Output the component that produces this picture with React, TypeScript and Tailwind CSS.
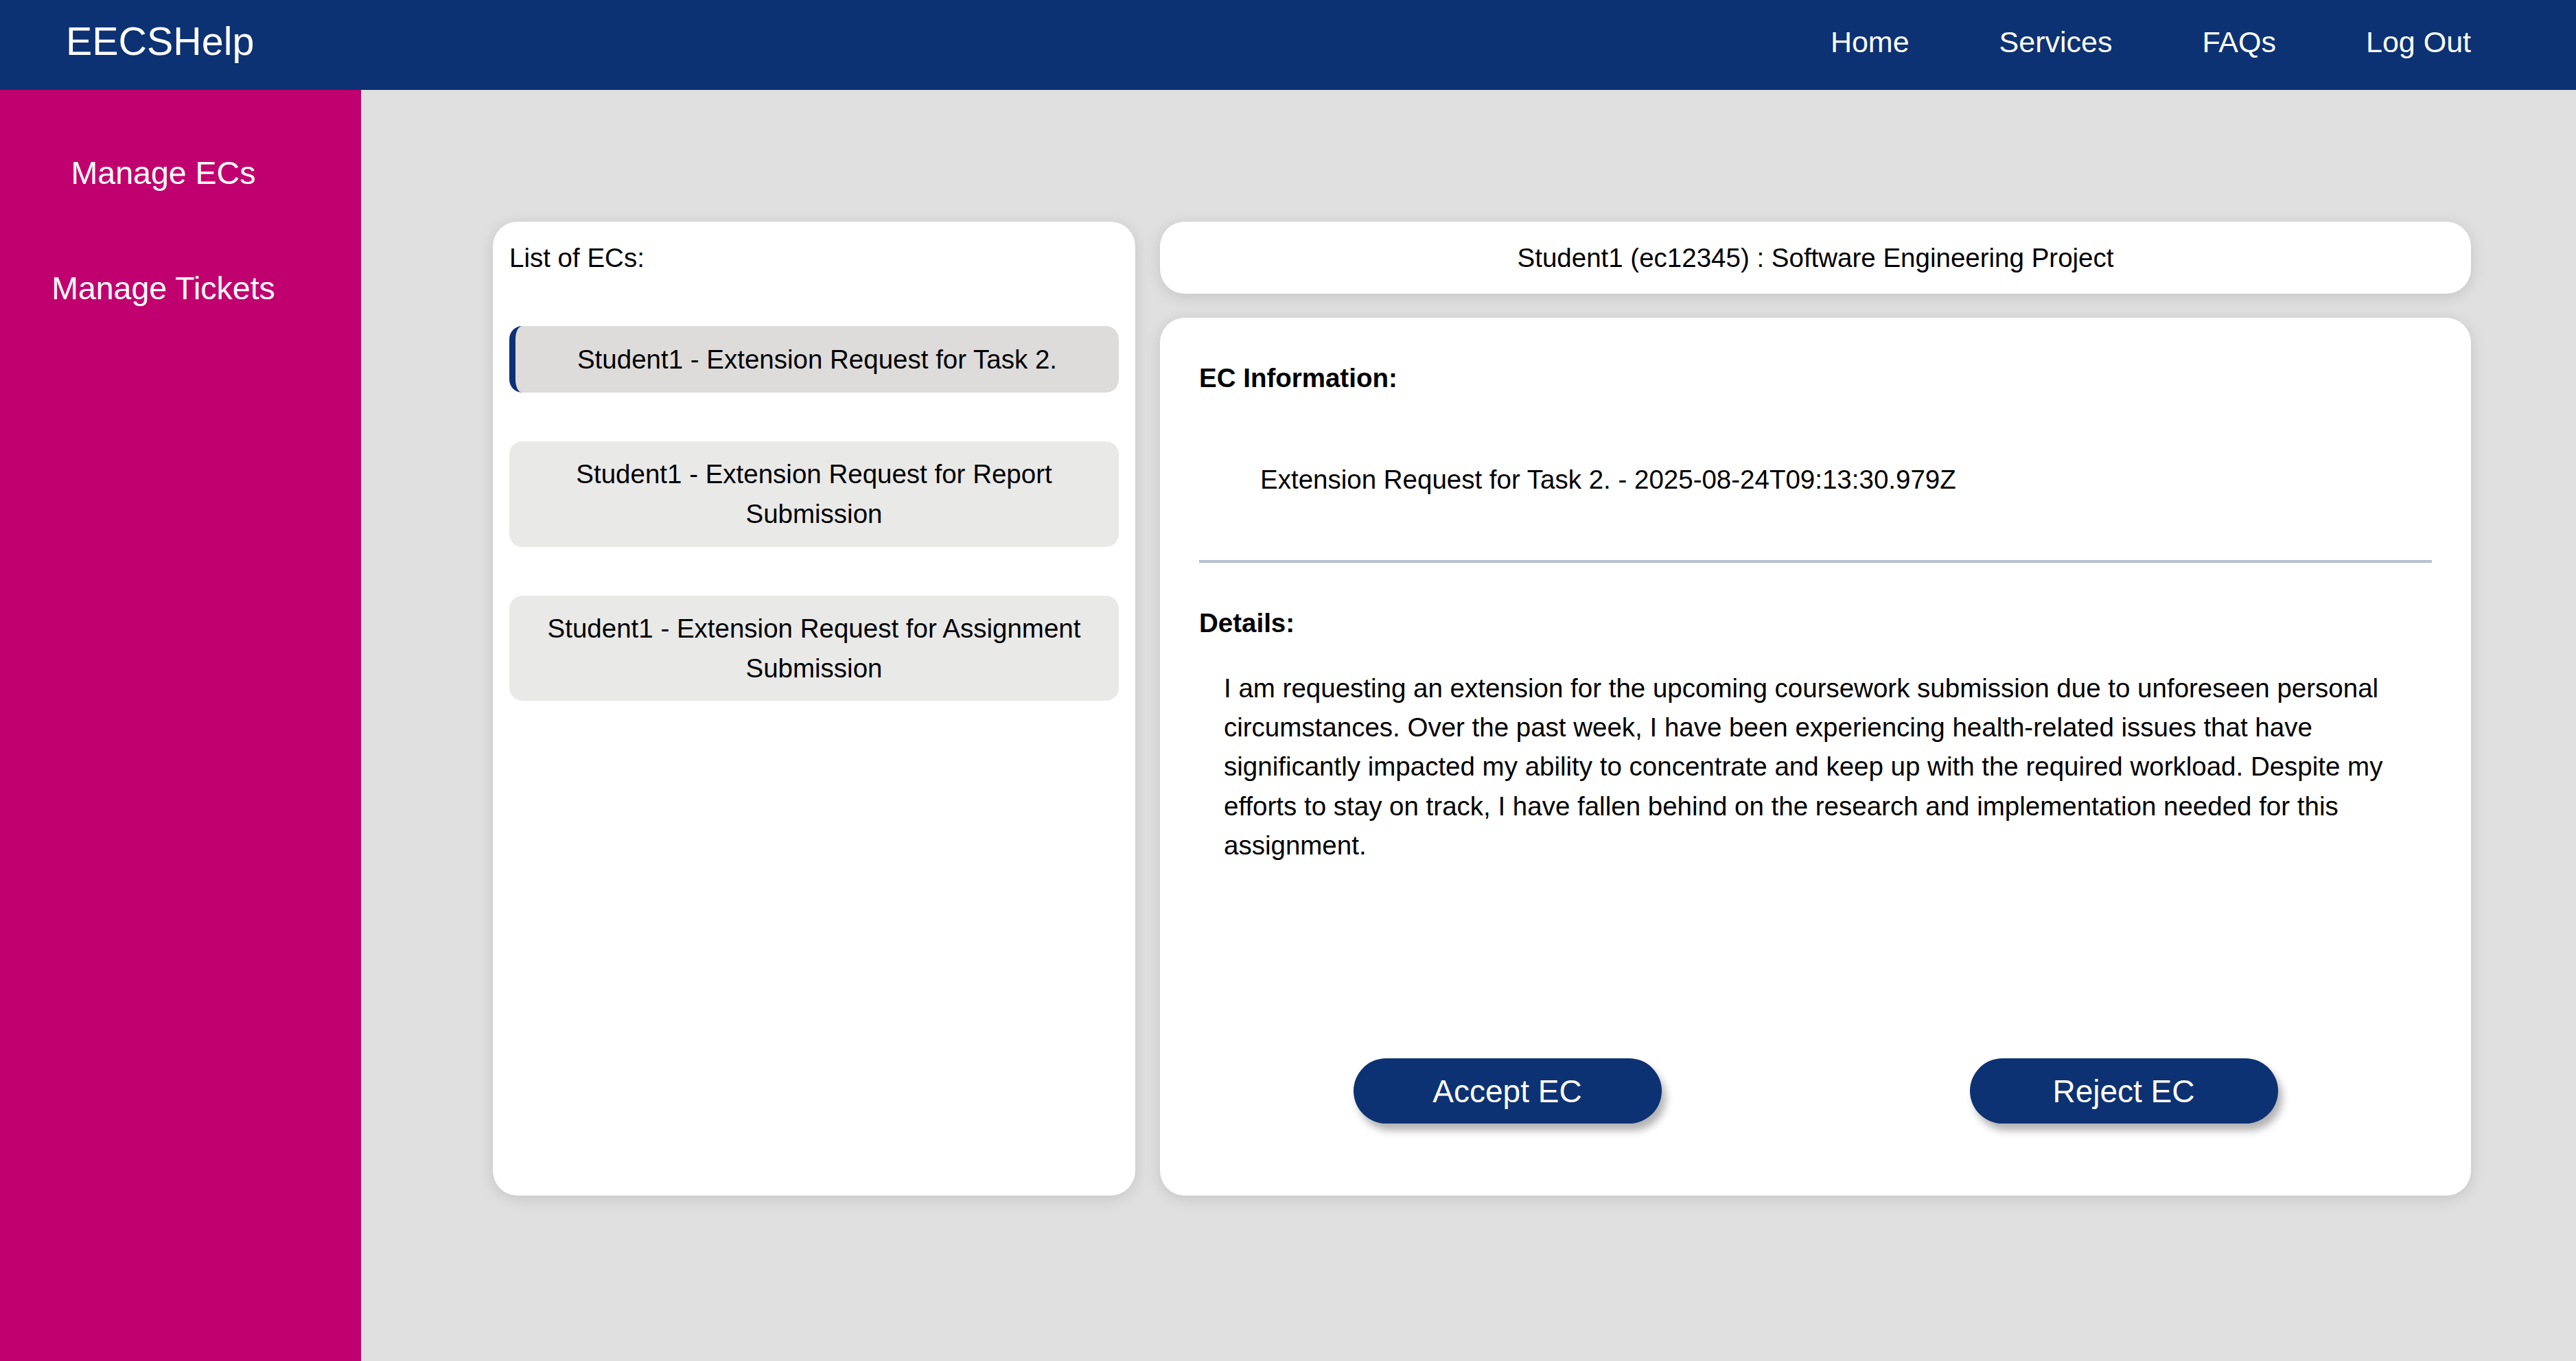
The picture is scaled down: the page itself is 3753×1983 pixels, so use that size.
const navLinks = ['Home', 'Services', 'FAQs', 'Log Out'];

const ecList = [
  { id: 1, label: 'Student1 - Extension Request for Task 2.', active: true },
  { id: 2, label: 'Student1 - Extension Request for Report Submission', active: false },
  { id: 3, label: 'Student1 - Extension Request for Assignment Submission', active: false },
];

export default function App() {
  return (
    <div
      className="min-h-[1983px] flex flex-col bg-[#e0e0e0] text-black"
      style={{ fontFamily: '"Liberation Sans", Arial, sans-serif' }}
    >
      {/* Top bar */}
      <header className="h-[131px] bg-[#0d3273] flex items-center justify-between pl-[96px] pr-[153px] pb-[9px] text-white">
        <span className="text-[57.4px] leading-none">EECSHelp</span>
        <nav className="flex items-center gap-[131px] text-[43px]">
          {navLinks.map((l) => (
            <a key={l} href="#" className="leading-none">
              {l}
            </a>
          ))}
        </nav>
      </header>

      <div className="flex flex-1">
        {/* Sidebar */}
        <aside className="w-[526px] bg-[#c1006f] flex flex-col items-center pr-[50px] pt-[93px] gap-[111px] text-white text-[46.5px]">
          <a href="#" className="leading-[57px]">Manage ECs</a>
          <a href="#" className="leading-[57px]">Manage Tickets</a>
        </aside>

        {/* Main */}
        <main className="flex-1 pt-[192px] pl-[192px] pr-[153px]">
          <div className="flex gap-[36px] h-[1419px] text-[38.5px] leading-[57.4px]">
            {/* EC list */}
            <section className="w-[936px] bg-white rounded-[36px] shadow-[0_4px_22px_rgba(0,0,0,0.13)] p-[24px] flex flex-col gap-[71px]">
              <p>List of ECs:</p>
              {ecList.map((ec) => (
                <div
                  key={ec.id}
                  className={`rounded-[19px] px-[24px] py-[19.5px] text-center ${
                    ec.active ? 'bg-[#dddcdb] border-l-[9px] border-[#0d3273]' : 'bg-[#e9e9e8]'
                  }`}
                >
                  {ec.label}
                </div>
              ))}
            </section>

            {/* Detail column */}
            <div className="flex-1 flex flex-col gap-[35px]">
              <div className="bg-white rounded-[36px] shadow-[0_4px_22px_rgba(0,0,0,0.13)] p-[24px] text-center">
                Student1 (ec12345) : Software Engineering Project
              </div>

              <section className="flex-1 bg-white rounded-[36px] shadow-[0_4px_22px_rgba(0,0,0,0.13)] px-[57px] pt-[59px] pb-[57px] flex flex-col">
                <p className="font-bold">EC Information:</p>
                <p className="pl-[89px] mt-[90px]">
                  Extension Request for Task 2. - 2025-08-24T09:13:30.979Z
                </p>
                <div className="h-[4px] bg-[#b4c0d4] mt-[89px]" />
                <p className="font-bold mt-[59px]">Details:</p>
                <p className="px-[36px] mt-[37px]">
                  I am requesting an extension for the upcoming coursework submission due to unforeseen personal
                  circumstances. Over the past week, I have been experiencing health-related issues that have
                  significantly impacted my ability to concentrate and keep up with the required workload. Despite my
                  efforts to stay on track, I have fallen behind on the research and implementation needed for this
                  assignment.
                </p>
                <div className="mt-auto mb-[48px] flex justify-around">
                  <button className="w-[449px] h-[95px] rounded-full bg-[#0d3273] text-white text-[46px] leading-none shadow-[6px_10px_12px_rgba(0,0,0,0.3)]">
                    Accept EC
                  </button>
                  <button className="w-[449px] h-[95px] rounded-full bg-[#0d3273] text-white text-[46px] leading-none shadow-[6px_10px_12px_rgba(0,0,0,0.3)]">
                    Reject EC
                  </button>
                </div>
              </section>
            </div>
          </div>
        </main>
      </div>
    </div>
  );
}
